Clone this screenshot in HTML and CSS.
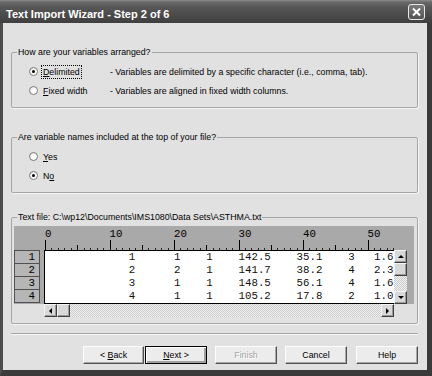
FILE: index.html
```html
<!DOCTYPE html>
<html>
<head>
<meta charset="utf-8">
<title>Text Import Wizard</title>
<link rel="stylesheet" href="styles.css">
</head>
<body>
<div class="window">
  <div class="titlebar">
    <span class="title">Text Import Wizard - Step 2 of 6</span>
    <span class="close"><svg width="15" height="14" viewBox="0 0 15 14"><path d="M4 3.5L11 10.5M11 3.5L4 10.5" stroke="#fff" stroke-width="2" fill="none"/></svg></span>
  </div>
  <div class="frame">
    <div class="group g1">
      <div class="group-title">How are your variables arranged?</div>
      <div class="opt"><span class="radio on"></span><span class="lbl"><span class="focus"><u>D</u>elimited</span></span><span class="desc">- Variables are delimited by a specific character (i.e., comma, tab).</span></div>
      <div class="opt"><span class="radio"></span><span class="lbl"><u>F</u>ixed width</span><span class="desc">- Variables are aligned in fixed width columns.</span></div>
    </div>
    <div class="group g2">
      <div class="group-title">Are variable names included at the top of your file?</div>
      <div class="opt"><span class="radio"></span><span class="lbl"><u>Y</u>es</span></div>
      <div class="opt"><span class="radio on"></span><span class="lbl">N<u>o</u></span></div>
    </div>
    <div class="group g3">
      <div class="group-title">Text file: C:\wp12\Documents\IMS1080\Data Sets\ASTHMA.txt</div>
      <div class="grid">
        <div class="gray">
          <div class="ruler">
            <div class="labels"><span>0</span><span>10</span><span>20</span><span>30</span><span>40</span><span>50</span></div>
            <div class="ticks"></div>
          </div>
          <div class="rows">
            <div class="rowheads"><div>1</div><div>2</div><div>3</div><div>4</div></div>
            <div class="data"><pre>             1      1    1    142.5    35.1    3   1.6
             2      2    1    141.7    38.2    4   2.3
             3      1    1    148.5    56.1    4   1.6
             4      1    1    105.2    17.8    2   1.0</pre></div>
            <div class="vscroll">
              <span class="sb up"></span>
              <span class="sb thumb"></span>
              <span class="track"></span>
              <span class="sb down"></span>
            </div>
          </div>
        </div>
        <div class="hscroll">
          <span class="sb left"></span>
          <span class="sb thumb"></span>
          <span class="track"></span>
          <span class="sb right"></span>
        </div>
      </div>
    </div>
    <div class="sep"></div>
    <div class="buttons">
      <span class="btn back"><span>&lt; <u>B</u>ack</span></span>
      <span class="btn default"><span><u>N</u>ext &gt;</span></span>
      <span class="btn disabled"><span>Finish</span></span>
      <span class="btn"><span>Cancel</span></span>
      <span class="btn"><span>Help</span></span>
    </div>
  </div>
</div>
</body>
</html>
```
FILE: styles.css
```css
* { box-sizing: border-box; margin: 0; padding: 0; }
html, body { width: 432px; height: 376px; overflow: hidden; }
body {
  font-family: "Liberation Sans", Arial, sans-serif;
  font-size: 8.8px;
  color: #000;
  background: #e1e1e1;
}
.window { width: 432px; height: 376px; display: flex; flex-direction: column; }

.titlebar {
  height: 23px; flex: none;
  display: flex; align-items: flex-start; justify-content: space-between;
  padding: 0 7px 0 6px;
  background: linear-gradient(#8c8c8c 0, #6a6a6a 2px, #575757 7px, #4b4b4b 15px, #3f3f3f 23px);
}
.title { color: #fff; font-weight: bold; font-size: 11px; margin-top: 8px; }
.close {
  margin-top: 4px;
  width: 17px; height: 16px;
  border: 1px solid #e8e8e8; border-radius: 3px;
  background: linear-gradient(#7a7a7a, #555);
  display: flex; align-items: center; justify-content: center;
}

.frame {
  flex: 1;
  background: #e1e1e1;
  border-left: 3px solid #4c4c4c;
  border-right: 5px solid #3a3a3a;
  border-bottom: 6px solid #3a3a3a;
  display: flex; flex-direction: column;
}

.group {
  margin: 0 9px 0 8px;
  border: 1px solid #a6a6a6;
  border-radius: 2px;
  box-shadow: 1px 1px 0 #f6f6f6;
}
.group-title {
  width: fit-content;
  margin: -6px 0 4px 5px;
  padding: 0 1px;
  line-height: 11px;
  background: #e1e1e1;
}
.g1 { margin-top: 29px; padding-bottom: 7px; }
.g2 { margin-top: 29px; padding-bottom: 7px; }
.g3 { margin-top: 24px; padding-bottom: 6px; }
.g3 .group-title { margin-bottom: 3px; }

.opt { height: 19px; display: flex; align-items: center; padding-left: 17px; }
.radio {
  flex: none; position: relative;
  width: 9px; height: 9px; border-radius: 50%;
  border: 1px solid #7c7c7c;
  background: radial-gradient(circle at 65% 65%, #fff 0, #fff 40%, #dcdcdc 100%);
}
.radio.on::after {
  content: ""; position: absolute; left: 2px; top: 2px;
  width: 3px; height: 3px; border-radius: 50%; background: #000;
}
.lbl { width: 67px; margin-left: 5px; flex: none; }
.focus { outline: 1px dotted #000; outline-offset: 1px; }

.grid { margin: 0 3px 0 2px; height: 91px; display: flex; flex-direction: column; }
.gray { background: #a9a9a9; height: 78px; display: flex; flex-direction: column; }
.ruler { height: 24px; padding-left: 31px; display: flex; flex-direction: column; justify-content: flex-end; }
.labels, .ticks, .rowheads, .data pre {
  font-family: "Liberation Mono", "Courier New", monospace;
  font-size: 10.75px;
}
.labels { display: flex; height: 11px; line-height: 11px; }
.labels span { flex: none; width: 10ch; }
.ticks {
  width: 350px; height: 10px;
  background:
    repeating-linear-gradient(90deg, #000 0 1px, transparent 1px 10ch) left bottom / 100% 10px no-repeat,
    repeating-linear-gradient(90deg, #000 0 1px, transparent 1px 5ch) left bottom / 100% 5px no-repeat,
    repeating-linear-gradient(90deg, #222 0 1px, transparent 1px 1ch) left bottom / 100% 2px no-repeat;
}
.rows { display: flex; height: 54px; }
.rowheads { flex: none; width: 26px; margin-right: 4px; border-top: 1px solid #505050; }
.rowheads div {
  height: 13px; line-height: 12px;
  border: 1px solid #505050; border-top: 0;
  background: #b6b6b6;
  text-align: right; padding-right: 4px;
}
.data {
  flex: none; width: 350px; height: 54px;
  background: #fff;
  border: 1px solid #000; border-right: 0;
  overflow: hidden;
}
.data pre { line-height: 13px; white-space: pre; color: #111; }
.vscroll { flex: none; width: 13px; height: 54px; display: flex; flex-direction: column; }

.sb {
  flex: none; width: 13px; height: 13px;
  background: #d9d9d9;
  border: 1px solid; border-color: #f4f4f4 #404040 #404040 #f4f4f4;
  box-shadow: inset -1px -1px 0 #9a9a9a;
  display: flex; align-items: center; justify-content: center;
}
.track {
  flex: 1;
  background: repeating-conic-gradient(#f2f2f2 0 25%, #cacaca 0 50%) 0 0 / 2px 2px;
}
.sb.up::before, .sb.down::before, .sb.left::before, .sb.right::before { content: ""; width: 0; height: 0; border: 3px solid transparent; }
.sb.up::before { border-bottom-color: #000; border-top-width: 0; }
.sb.down::before { border-top-color: #000; border-bottom-width: 0; }
.sb.left::before { border-right-color: #000; border-left-width: 0; }
.sb.right::before { border-left-color: #000; border-right-width: 0; }

.hscroll { display: flex; height: 13px; width: 350px; margin-left: 30px; }

.sep {
  margin: 9px 9px 0 8px; height: 2px;
  border-top: 1px solid #a6a6a6; border-bottom: 1px solid #f8f8f8;
}
.buttons { display: flex; justify-content: flex-end; margin: 11px 9px 0 0; }
.btn {
  flex: none; width: 62px; height: 18px; margin-left: 8px;
  display: flex; align-items: center; justify-content: center;
  background: #ececec;
  border: 1px solid; border-color: #fdfdfd #505050 #505050 #fdfdfd;
  box-shadow: inset -1px -1px 0 #a8a8a8;
}
.btn > span { white-space: pre; }
.btn.back { width: 61px; margin-right: -7px; }
.btn.default { border-color: #000; box-shadow: inset 1px 1px 0 #fff, inset -2px -2px 0 #a0a0a0; }
.btn.disabled { color: #a4a4a4; text-shadow: 1px 1px 0 #fff; }
.btn + .btn:last-child { margin-left: 9px; }
```
